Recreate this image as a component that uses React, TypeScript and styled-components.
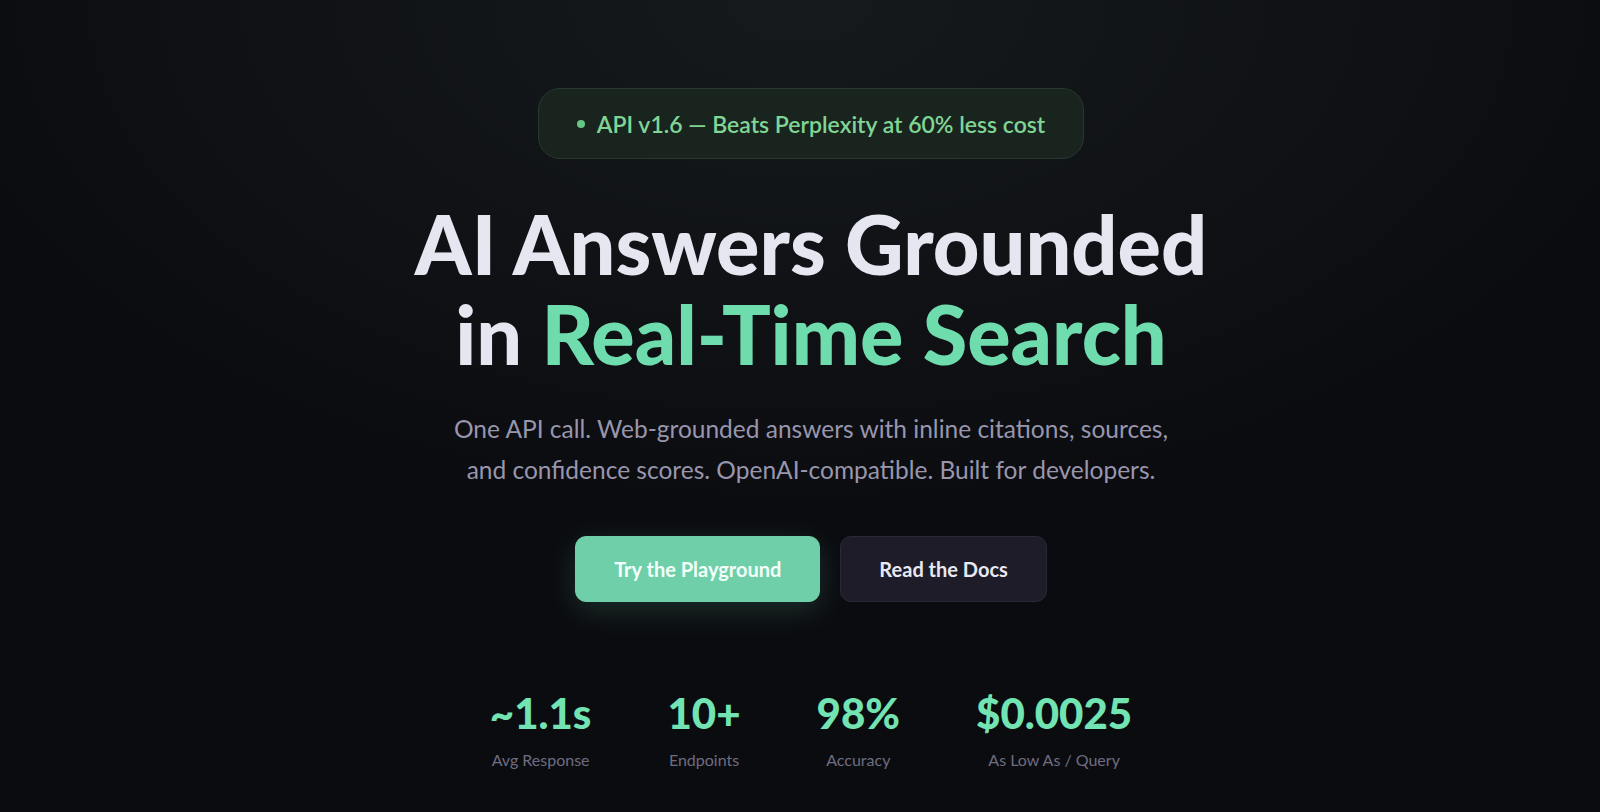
import React from 'react'
import styled, { createGlobalStyle } from 'styled-components'

const GlobalStyle = createGlobalStyle`
    html, body {
        margin: 0;
        padding: 0;
        background: #0c0e11;
    }
    * {
        box-sizing: border-box;
    }
`

const stats = [
    { value: '~1.1s', label: 'Avg Response' },
    { value: '10+', label: 'Endpoints' },
    { value: '98%', label: 'Accuracy' },
    { value: '$0.0025', label: 'As Low As / Query' },
]

const App = () => {
    return (
        <>
            <GlobalStyle />
            <Page>
                <Hero>
                    <Badge>
                        <BadgeDot />
                        API v1.6 — Beats Perplexity at 60% less cost
                    </Badge>
                    <Title>
                        AI Answers Grounded
                        <br />
                        in <Accent>Real-Time Search</Accent>
                    </Title>
                    <Subtitle>
                        One API call. Web-grounded answers with inline citations, sources,
                        <br />
                        and confidence scores. OpenAI-compatible. Built for developers.
                    </Subtitle>
                    <Actions>
                        <Button $primary>Try the Playground</Button>
                        <Button>Read the Docs</Button>
                    </Actions>
                    <Stats>
                        {stats.map((s) => (
                            <Stat key={s.label}>
                                <StatValue>{s.value}</StatValue>
                                <StatLabel>{s.label}</StatLabel>
                            </Stat>
                        ))}
                    </Stats>
                </Hero>
            </Page>
        </>
    )
}

export default App

const Page = styled.div`
    min-height: 100vh;
    padding-left: 22px;
    background:
        radial-gradient(ellipse 900px 520px at 50% 0%, #161a1d 0%, rgba(22, 26, 29, 0) 100%),
        #0b0c10;
    font-family: Lato, 'Noto Sans', sans-serif;
    display: flex;
    justify-content: center;
    overflow: hidden;
`
const Hero = styled.section`
    display: flex;
    flex-direction: column;
    align-items: center;
    padding-top: 88px;
    text-align: center;
`
const Badge = styled.div`
    display: flex;
    align-items: center;
    gap: 12px;
    height: 71px;
    padding: 0 38px;
    border-radius: 22px;
    background: #19241f;
    border: 1px solid #28392f;
    color: #80d595;
    font-size: 23px;
    font-weight: 600;
`
const BadgeDot = styled.span`
    width: 8px;
    height: 8px;
    border-radius: 50%;
    background: #66c784;
`
const Title = styled.h1`
    margin: 40px 0 0;
    font-size: 81px;
    line-height: 90px;
    font-weight: 900;
    letter-spacing: 0;
    color: #e6e6f0;
`
const Accent = styled.span`
    color: #6fdcae;
`
const Subtitle = styled.p`
    margin: 29px 0 0;
    font-size: 24.5px;
    line-height: 41px;
    color: #9896ad;
`
const Actions = styled.div`
    display: flex;
    gap: 20px;
    margin-top: 46px;
`
const Button = styled.button<{ $primary?: boolean }>`
    height: 66px;
    padding: 0 38px;
    border-radius: 11px;
    font-family: inherit;
    font-size: 20px;
    font-weight: 700;
    cursor: pointer;
    border: 1px solid ${(p) => (p.$primary ? '#6fcfa9' : '#2a2937')};
    background: ${(p) => (p.$primary ? '#6fcfa9' : '#1d1c28')};
    color: ${(p) => (p.$primary ? '#f4fff9' : '#e8e8f2')};
    box-shadow: ${(p) => (p.$primary ? '0 8px 30px rgba(111, 207, 169, 0.18)' : 'none')};
`
const Stats = styled.div`
    display: flex;
    gap: 76px;
    margin-top: 90px;
`
const Stat = styled.div`
    display: flex;
    flex-direction: column;
    align-items: center;
    gap: 16px;
`
const StatValue = styled.div`
    font-size: 42px;
    font-weight: 900;
    line-height: 1;
    color: #72e3b2;
`
const StatLabel = styled.div`
    font-size: 16px;
    color: #6e6c80;
`
